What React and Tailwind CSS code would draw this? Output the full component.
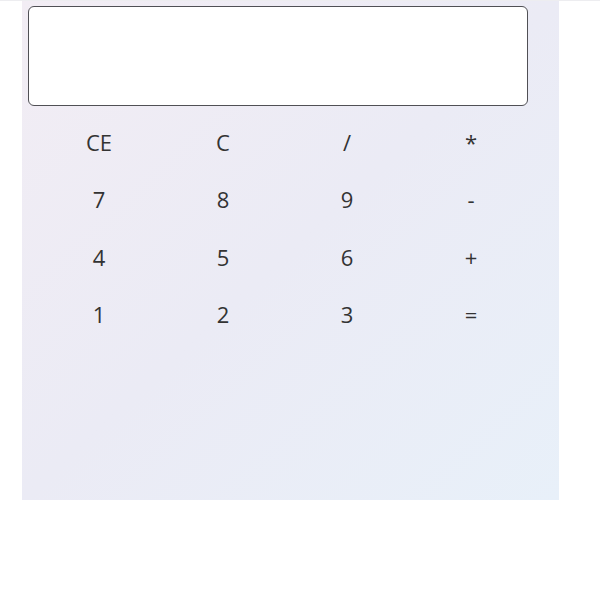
const keys = [
  ["CE", "C", "/", "*"],
  ["7", "8", "9", "-"],
  ["4", "5", "6", "+"],
  ["1", "2", "3", "="],
];

export default function App() {
  return (
    <div className="min-h-[600px] border-t border-[#ededf0] bg-white font-['Open_Sans',sans-serif]">
      <div className="ml-[22px] h-[499px] w-[537px] bg-gradient-to-br from-[#f2edf4] via-[#ebebf5] to-[#e8f0f9] px-[6px] pt-[5px]">
        <input
          type="text"
          className="block h-[100px] w-[500px] rounded-[6px] border border-[#505055] bg-white px-3 text-3xl outline-none"
        />
        <div className="ml-[9px] mt-[7px] grid w-[496px] grid-cols-4">
          {keys.flat().map((k) => (
            <button
              key={k}
              className="h-[57.5px] text-center text-[22px] leading-none text-[#333]"
            >
              {k}
            </button>
          ))}
        </div>
      </div>
    </div>
  );
}
